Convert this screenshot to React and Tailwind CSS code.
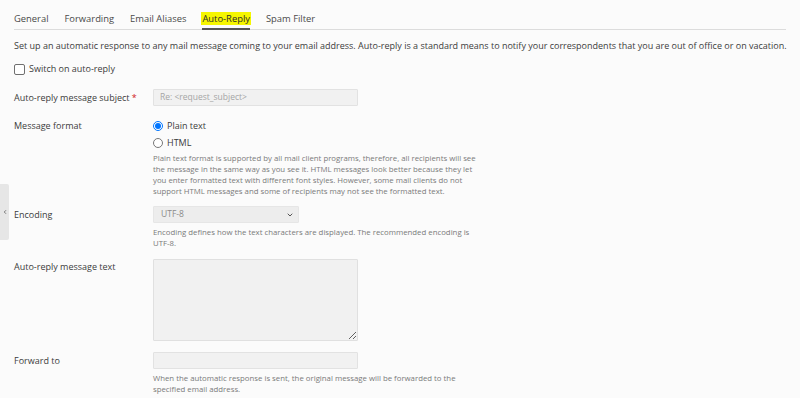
import { ChevronDown, ChevronLeft } from "lucide-react";

const tabs = ["General", "Forwarding", "Email Aliases", "Auto-Reply", "Spam Filter"];

function Row({ label, required, labelClass = "", children, className = "" }) {
  return (
    <div className={`flex ${className}`}>
      <div className={`w-[139px] shrink-0 text-[9px] text-[#3c3c3c] ${labelClass}`}>
        {label}
        {required && <span className="text-[#d02020]"> *</span>}
      </div>
      <div className="flex-1">{children}</div>
    </div>
  );
}

function Help({ children, className = "" }) {
  return (
    <p className={`text-[7.8px] leading-[11px] text-[#7a7a7a] w-[326px] ${className}`}>{children}</p>
  );
}

function Radio({ checked, label }) {
  return (
    <div className="flex items-center h-[14px] gap-[4px]">
      <span
        className={`w-[10px] h-[10px] rounded-full border flex items-center justify-center bg-white ${
          checked ? "border-[#0075ff]" : "border-[#767676]"
        }`}
      >
        {checked && <span className="w-[6px] h-[6px] rounded-full bg-[#0075ff]" />}
      </span>
      <span className="text-[9px] text-[#3c3c3c]">{label}</span>
    </div>
  );
}

export default function App() {
  return (
    <div className="relative h-[398px] overflow-hidden bg-[#fbfbfb] font-['Open_Sans',sans-serif] text-[#333]">
      <nav className="mx-[14px] pt-[12px] flex gap-[16px] border-b border-[#dcdcdc] text-[9.4px] leading-[13px]">
        {tabs.map((t) =>
          t === "Auto-Reply" ? (
            <div key={t} className="-mb-px border-b-2 border-[#555] pb-[3px]">
              <span className="bg-[#f6f600] text-[#2c2c2c] px-[1px] -mx-[1px]">{t}</span>
            </div>
          ) : (
            <div key={t} className="pb-[4px] text-[#4a4a4a]">{t}</div>
          )
        )}
      </nav>

      <p className="mt-[10px] px-[14px] text-[9px] leading-[12px] text-[#3c3c3c] whitespace-nowrap">
        Set up an automatic response to any mail message coming to your email address. Auto-reply is a standard means to notify your correspondents that you are out of office or on vacation.
      </p>

      <div className="px-[14px]">
        <div className="mt-[11px] flex items-center h-[12px] gap-[4px]">
          <span className="w-[11px] h-[11px] rounded-[2px] border border-[#6f6f6f] bg-white" />
          <span className="text-[9px] text-[#3c3c3c]">Switch on auto-reply</span>
        </div>

        <Row label="Auto-reply message subject" required className="mt-[14px] items-center h-[17px]">
          <div className="w-[205px] h-[17px] bg-[#f1f1f1] border border-[#e2e2e2] rounded-[1px] flex items-center px-[6px] text-[8.5px] text-[#a5a5a5]">
            Re: &lt;request_subject&gt;
          </div>
        </Row>

        <Row label="Message format" labelClass="leading-[14px]" className="mt-[13px]">
          <Radio checked label="Plain text" />
          <div className="mt-[3px]">
            <Radio label="HTML" />
          </div>
          <Help className="mt-[2.5px]">
            Plain text format is supported by all mail client programs, therefore, all recipients will see the message in the same way as you see it. HTML messages look better because they let you enter formatted text with different font styles. However, some mail clients do not support HTML messages and some of recipients may not see the formatted text.
          </Help>
        </Row>

        <Row label="Encoding" labelClass="leading-[17px]" className="mt-[9.5px]">
          <div className="relative w-[146px] h-[17px] bg-[#ededed] border border-[#e6e6e6] rounded-[1px] flex items-center px-[7px] text-[8.5px] text-[#8a8a8a]">
            UTF-8
            <ChevronDown className="absolute right-[4px] top-[4px] w-[8px] h-[8px] text-[#555]" strokeWidth={3} />
          </div>
          <Help className="mt-[3.5px]">
            Encoding defines how the text characters are displayed. The recommended encoding is UTF-8.
          </Help>
        </Row>

        <Row label="Auto-reply message text" labelClass="leading-[16px]" className="mt-[10.5px]">
          <textarea
            readOnly
            className="block w-[205px] h-[82px] bg-[#f1f1f1] border border-[#e0e0e0] rounded-[1px] outline-none"
          />
        </Row>

        <Row label="Forward to" labelClass="leading-[17px]" className="mt-[11px]">
          <div className="w-[205px] h-[17px] bg-[#f1f1f1] border border-[#e2e2e2] rounded-[1px]" />
          <Help className="mt-[3.5px]">
            When the automatic response is sent, the original message will be forwarded to the specified email address.
          </Help>
        </Row>
      </div>

      <div className="absolute left-0 top-[184px] w-[9px] h-[56px] bg-[#e6e6e6] rounded-r-[2px] flex items-center justify-center">
        <ChevronLeft className="w-[6px] h-[6px] text-[#555]" strokeWidth={3} />
      </div>
    </div>
  );
}
